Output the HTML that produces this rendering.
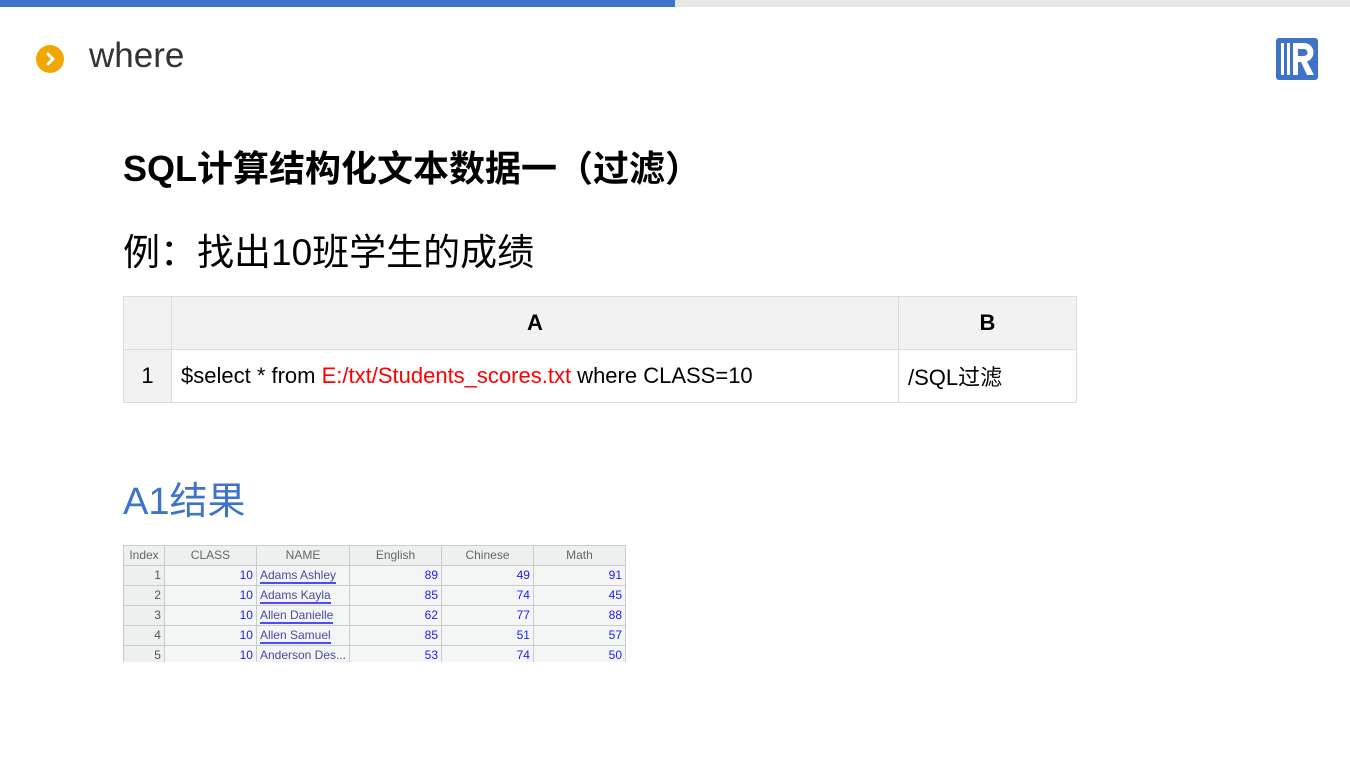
<!DOCTYPE html>
<html><head><meta charset="utf-8"><style>
body{margin:0;width:1350px;height:759px;background:#fff;position:relative;overflow:hidden;font-family:"Liberation Sans","Noto Sans CJK SC",sans-serif}
.a{position:absolute}
table{border-collapse:collapse;position:absolute}
.m{table-layout:fixed}
.m td{border:1px solid #dcdcdc;font-size:22px;color:#000;box-sizing:border-box}
.s td{border:1px solid #c8cccc;font-size:12px;height:19px;padding:0 3px;background:#f4f6f6;color:#1a1aff;text-align:right;line-height:19px;white-space:nowrap}
.s tr:first-child td{background:#eef0f0;color:#666;text-align:center}
.s td:first-child{color:#555;background:#eef0f0}
.s td.n{text-align:left;color:#4a4aa0}
.s td.n span{border-bottom:2px solid #4a4aff}
</style></head><body>
<div class="a" style="left:0;top:0;width:675px;height:7px;background:#3f73c9"></div>
<div class="a" style="left:675px;top:0;width:675px;height:7px;background:#e6e6e6"></div>
<div class="a" style="left:36px;top:45px;width:28px;height:28px;border-radius:50%;background:#f0a800"></div>
<svg class="a" style="left:36px;top:45px" width="28" height="28"><path d="M12 9l5 5-5 5" stroke="#fff" stroke-width="3" fill="none" stroke-linecap="round" stroke-linejoin="round"/></svg>
<div class="a" style="left:89px;top:36px;font-size:35px;color:#333">where</div>
<svg class="a" style="left:1276px;top:38px" width="42" height="42" viewBox="0 0 42 42"><rect width="42" height="42" rx="3" fill="#3f73c9"/><rect x="5" y="5" width="3" height="32" fill="#fff"/><rect x="11" y="5" width="3" height="32" fill="#fff"/><path d="M17 5h11a9.5 9.5 0 0 1 3 18.5l7 13.5h-7l-6-13h-3v-6h6a3.5 3.5 0 0 0 0-7h-6v26h-5z" fill="#fff"/></svg>
<div class="a" style="left:123px;top:140px;font-size:36px;font-weight:bold;color:#000">SQL计算结构化文本数据一（过滤）</div>
<div class="a" style="left:123px;top:222px;font-size:37px;color:#000">例：找出10班学生的成绩</div>
<table class="m" style="left:123px;top:296px;width:953px">
<tr style="height:53px;background:#f2f2f2"><td style="width:48px"></td><td style="width:727px;text-align:center;font-weight:bold">A</td><td style="width:178px;text-align:center;font-weight:bold">B</td></tr>
<tr style="height:53px"><td style="background:#f2f2f2;text-align:center">1</td><td style="padding-left:9px">$select * from <span style="color:#f00">E:/txt/Students_scores.txt</span> where CLASS=10</td><td style="padding-left:9px">/SQL过滤</td></tr>
</table>
<div class="a" style="left:123px;top:470px;font-size:38px;color:#3f73c9">A1结果</div>
<div class="a" style="left:123px;top:545px;width:503px;height:117px;overflow:hidden">
<table class="s" style="left:0;top:0;width:503px">
<tr><td style="width:34px">Index</td><td style="width:85px">CLASS</td><td style="width:85px">NAME</td><td style="width:85px">English</td><td style="width:85px">Chinese</td><td style="width:85px">Math</td></tr>
<tr><td>1</td><td>10</td><td class="n"><span>Adams Ashley</span></td><td>89</td><td>49</td><td>91</td></tr>
<tr><td>2</td><td>10</td><td class="n"><span>Adams Kayla</span></td><td>85</td><td>74</td><td>45</td></tr>
<tr><td>3</td><td>10</td><td class="n"><span>Allen Danielle</span></td><td>62</td><td>77</td><td>88</td></tr>
<tr><td>4</td><td>10</td><td class="n"><span>Allen Samuel</span></td><td>85</td><td>51</td><td>57</td></tr>
<tr><td>5</td><td>10</td><td class="n"><span>Anderson Des...</span></td><td>53</td><td>74</td><td>50</td></tr>
</table></div>
</body></html>
